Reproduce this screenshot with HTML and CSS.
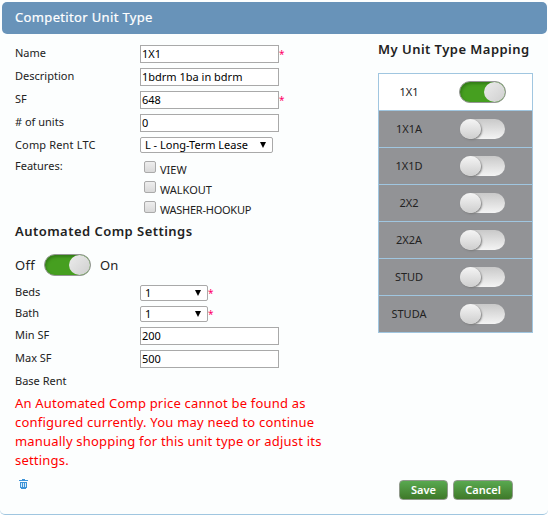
FILE: index.html
```html
<!DOCTYPE html>
<html lang="en">
<head>
<meta charset="utf-8">
<title>Competitor Unit Type</title>
<link rel="stylesheet" href="styles.css">
</head>
<body>
<div class="dialog">
  <header class="titlebar"><span class="title-text">Competitor Unit Type</span></header>
  <main class="content">
    <section class="form">
      <div class="row"><label>Name</label><input class="text" value="1X1"><span class="req">*</span></div>
      <div class="row"><label>Description</label><input class="text spaced" value="1bdrm 1ba in bdrm"></div>
      <div class="row"><label>SF</label><input class="text" value="648"><span class="req">*</span></div>
      <div class="row"><label>#&nbsp;of units</label><input class="text" value="0"></div>
      <div class="row short"><label class="rent-label">Comp Rent LTC</label><div class="select wide"><span>L - Long-Term Lease</span><svg class="caret" viewBox="0 0 6 6"><path d="M0 0h6L3 6z"/></svg></div></div>
      <div class="features">
        <label>Features:</label>
        <div class="checks">
          <div class="check"><i></i><span>VIEW</span></div>
          <div class="check"><i></i><span>WALKOUT</span></div>
          <div class="check"><i></i><span class="tight">WASHER-HOOKUP</span></div>
        </div>
      </div>
      <h2 class="heading">Automated Comp Settings</h2>
      <div class="auto"><span class="off">Off</span><span class="toggle on"><b></b></span><span class="on-text">On</span></div>
      <div class="row short"><label>Beds</label><div class="select"><span>1</span><svg class="caret" viewBox="0 0 6 6"><path d="M0 0h6L3 6z"/></svg></div><span class="req">*</span></div>
      <div class="row short"><label>Bath</label><div class="select"><span>1</span><svg class="caret" viewBox="0 0 6 6"><path d="M0 0h6L3 6z"/></svg></div><span class="req">*</span></div>
      <div class="row"><label>Min SF</label><input class="text" value="200"></div>
      <div class="row"><label>Max SF</label><input class="text" value="500"></div>
      <div class="row base"><label>Base Rent</label></div>
      <p class="error">An Automated Comp price cannot be found as<br>configured currently. You may need to continue<br>manually shopping for this unit type or adjust its<br>settings.</p>
    </section>
    <aside class="mapping">
      <h2 class="heading">My Unit Type Mapping</h2>
      <div class="units">
        <div class="unit active"><span>1X1</span><span class="toggle on"><b></b></span></div>
        <div class="unit"><span>1X1A</span><span class="toggle"><b></b></span></div>
        <div class="unit"><span>1X1D</span><span class="toggle"><b></b></span></div>
        <div class="unit"><span>2X2</span><span class="toggle"><b></b></span></div>
        <div class="unit"><span>2X2A</span><span class="toggle"><b></b></span></div>
        <div class="unit"><span>STUD</span><span class="toggle"><b></b></span></div>
        <div class="unit"><span>STUDA</span><span class="toggle"><b></b></span></div>
      </div>
    </aside>
  </main>
  <footer class="footer">
    <svg class="trash" viewBox="0 0 9 10"><path d="M3 0h3v1h3v1H0V1h3zM1 3h7v6H7v1H2V9H1z"/><path class="slots" d="M2 4h1v4H2zM4 4h1v4H4zM6 4h1v4H6z"/></svg>
    <div class="buttons"><button class="save">Save</button><button class="cancel">Cancel</button></div>
  </footer>
</div>
</body>
</html>
```
FILE: styles.css
```css
* { box-sizing: border-box; }
body {
  margin: 0;
  width: 548px;
  height: 515px;
  overflow: hidden;
  background: #fff;
  color: #222;
  font: 11px/16px "Noto Sans", "Open Sans", sans-serif;
}
.dialog {
  height: 515px;
  padding: 2px 1px 0 2px;
  background: #fcfefe;
  border-bottom: 1px solid #a0c6e0;
  border-radius: 0 0 5px 5px;
}
.titlebar {
  width: 545px;
  height: 32px;
  padding-left: 13px;
  border-radius: 5px;
  background: #6893b9;
  color: #fff;
  font-size: 13px;
  line-height: 31px;
}
.title-text { letter-spacing: .35px; -webkit-text-stroke: .2px #fff; }
.content { display: flex; height: 435px; }
.form { width: 376px; padding: 8px 0 0 13px; }
.row { display: flex; align-items: center; height: 23px; }
.row label { width: 125px; flex: none; padding-bottom: 2px; }
.row .rent-label { padding-bottom: 0; letter-spacing: .15px; }
.row.short { height: 21px; }
.text {
  width: 139px;
  height: 18px;
  padding: 0 1px;
  border: 1px solid #a9a9a9;
  border-radius: 0;
  outline: 0;
  background: #fff;
  color: #000;
  font: 11px/16px "Noto Sans", sans-serif;
}
.spaced { letter-spacing: 0; }
.req { color: #f06; font-size: 10px; }
.select {
  display: flex;
  align-items: center;
  justify-content: space-between;
  width: 68px;
  height: 16px;
  padding: 0 6px 0 4px;
  border: 1px solid #a9a9a9;
  border-radius: 2px;
  background: #fff;
  color: #000;
}
.select.wide { width: 133px; }
.caret { width: 6px; height: 6px; }
.features { display: flex; height: 65px; padding-top: 3px; }
.features label { width: 129px; }
.checks { padding-top: 2px; }
.check { display: flex; height: 20px; gap: 4px; }
.check i {
  width: 12px;
  height: 12px;
  margin-top: 1px;
  border: 1px solid #aaa;
  border-radius: 2px;
  background: linear-gradient(#eee, #d9d9d9);
}
.check span { padding-top: 2px; }
.check .tight { letter-spacing: -.25px; }
.heading { margin: 0; font-size: 13px; line-height: 22px; font-weight: 600; letter-spacing: .46px; white-space: nowrap; color: #222; }
.auto { display: flex; align-items: center; height: 40px; padding-top: 5px; font-size: 13px; }
.off { width: 29px; letter-spacing: .3px; }
.on-text { margin-left: 9px; }
.toggle {
  display: flex;
  flex: none;
  width: 46px;
  height: 20px;
  border-radius: 11px;
  background: linear-gradient(#c9c9c9, #f4f4f4);
}
.toggle b {
  width: 21px;
  height: 20px;
  border-radius: 50%;
  background: linear-gradient(#f5f5f5, #cecece);
  box-shadow: 1px 1px 2px #777;
}
.toggle.on {
  justify-content: flex-end;
  width: 47px;
  height: 22px;
  border: 1px solid #969696;
  background: #469f20;
  box-shadow: inset 1px 2px 3px #327b16;
}
.toggle.on b { box-shadow: none; background: linear-gradient(135deg, #ececec, #cfcfcf); }
.base { height: 24px; }
.error { margin: 0; color: #f00; font-size: 13px; line-height: 19px; letter-spacing: .2px; white-space: nowrap; }
.mapping { padding-top: 4px; }
.units { width: 155px; margin-top: 13px; border: 1px solid #a0c6e0; }
.unit { display: flex; align-items: center; height: 37px; background: #929396; border-bottom: 1px solid #a0c6e0; }
.unit:last-child { height: 36px; border: 0; }
.unit.active { background: #fff; }
.unit > span:first-child { width: 60px; margin-right: 21px; text-align: center; }
.unit:not(.active) .toggle { width: 45px; }
.active .toggle { margin-left: -1px; }
.footer { display: flex; justify-content: space-between; padding: 10px 34px 0 17px; }
.trash { width: 9px; height: 10px; fill: #3c93d8; }
.trash .slots { fill: #d5ebfa; }
.buttons { display: flex; gap: 5px; padding-top: 1px; }
button {
  height: 20px;
  padding: 0;
  border: 1px solid #919a8c;
  border-radius: 4px;
  background: linear-gradient(#59a950, #3f7929);
  color: #fff;
  font: 600 11px/16px "Noto Sans", sans-serif;
}
.save { width: 49px; }
.cancel { width: 60px; }
```
